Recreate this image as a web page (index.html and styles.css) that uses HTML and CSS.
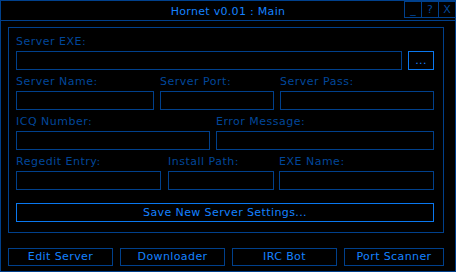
FILE: index.html
```html
<!DOCTYPE html>
<html>
<head>
    <title>Hornet v0.01 : Main</title>
    <link rel="stylesheet" href="styles.css">
</head>
<body>
    <div class="window">
        <div class="titlebar">
            <div></div>
            <div class="title">Hornet v0.01 : Main</div>
            <div class="winbtns">
                <span class="winbtn">_</span>
                <span class="winbtn">?</span>
                <span class="winbtn">X</span>
            </div>
        </div>
        <div class="content">
            <div class="group">
                <div class="row row-exe">
                    <div class="field">
                        <label>Server EXE:</label>
                        <input type="text">
                    </div>
                    <div class="field">
                        <label></label>
                        <button class="btn bright">...</button>
                    </div>
                </div>
                <div class="row row-server">
                    <div class="field">
                        <label>Server Name:</label>
                        <input type="text">
                    </div>
                    <div class="field">
                        <label>Server Port:</label>
                        <input type="text">
                    </div>
                    <div class="field">
                        <label>Server Pass:</label>
                        <input type="text">
                    </div>
                </div>
                <div class="row row-icq">
                    <div class="field">
                        <label>ICQ Number:</label>
                        <input type="text">
                    </div>
                    <div class="field">
                        <label>Error Message:</label>
                        <input type="text">
                    </div>
                </div>
                <div class="row row-reg">
                    <div class="field">
                        <label>Regedit Entry:</label>
                        <input type="text">
                    </div>
                    <div class="field">
                        <label>Install Path:</label>
                        <input type="text">
                    </div>
                    <div class="field">
                        <label>EXE Name:</label>
                        <input type="text">
                    </div>
                </div>
                <button class="btn bright save">Save New Server Settings...</button>
            </div>
            <div class="tools">
                <button class="btn">Edit Server</button>
                <button class="btn">Downloader</button>
                <button class="btn">IRC Bot</button>
                <button class="btn">Port Scanner</button>
            </div>
        </div>
    </div>
</body>
</html>
```

FILE: styles.css
```css
body {
    margin: 0;
    background-color: #000;
    font-family: "DejaVu Sans", sans-serif;
    font-size: 11px;
}
.window {
    width: 456px;
    height: 272px;
    box-sizing: border-box;
    border: 1px solid #00408c;
    background-color: #000;
}
.titlebar {
    display: grid;
    grid-template-columns: 1fr auto 1fr;
    height: 19px;
    border-bottom: 1px solid #00408c;
}
.title {
    color: #1582ff;
    line-height: 19px;
    padding-top: 1px;
    letter-spacing: 0.3px;
}
.winbtns {
    display: flex;
    justify-content: flex-end;
    align-items: flex-start;
}
.winbtn {
    width: 16px;
    height: 15px;
    border: 1px solid #00408c;
    margin-left: -1px;
    color: #00489c;
    text-align: center;
    line-height: 15px;
}
.winbtn:last-child {
    margin-right: -1px;
}
/* Main area */
.content {
    padding: 6px 11px 0 7px;
}
.group {
    border: 1px solid #00408c;
    padding: 2px 9px 10px 7px;
}
.row {
    display: grid;
    column-gap: 6px;
}
.row-exe {
    grid-template-columns: 1fr 26px;
}
.row-server {
    grid-template-columns: 138px 114px 1fr;
}
.row-icq {
    grid-template-columns: 194px 1fr;
}
.row-reg {
    grid-template-columns: 145px 106px 1fr;
}
.row-reg .field:nth-child(2) {
    margin-left: 1px;
    margin-right: -1px;
}
.field {
    display: flex;
    flex-direction: column;
    min-width: 0;
}
.field label {
    height: 21px;
    color: #00479a;
    line-height: 13px;
    padding-top: 5px;
    box-sizing: border-box;
    letter-spacing: 0.5px;
    white-space: nowrap;
}
.field input,
.field .btn {
    width: 100%;
    min-width: 0;
    height: 19px;
    box-sizing: border-box;
    border: 1px solid #00408c;
    background-color: #000;
    margin: 0;
    padding: 0;
    outline: none;
}
.btn {
    background-color: #000;
    border: 1px solid #00408c;
    color: #1582ff;
    font-family: "DejaVu Sans", sans-serif;
    font-size: 11px;
    padding: 0;
    letter-spacing: 0.4px;
}
.btn.bright,
.field .btn.bright {
    border-color: #0a78f0;
}
.save {
    display: block;
    width: 100%;
    height: 19px;
    margin-top: 13px;
}
.tools {
    display: grid;
    grid-template-columns: 105px 105px 105px 1fr;
    column-gap: 7px;
    margin-top: 15px;
}
.tools .btn {
    height: 18px;
    line-height: 16px;
}
```
